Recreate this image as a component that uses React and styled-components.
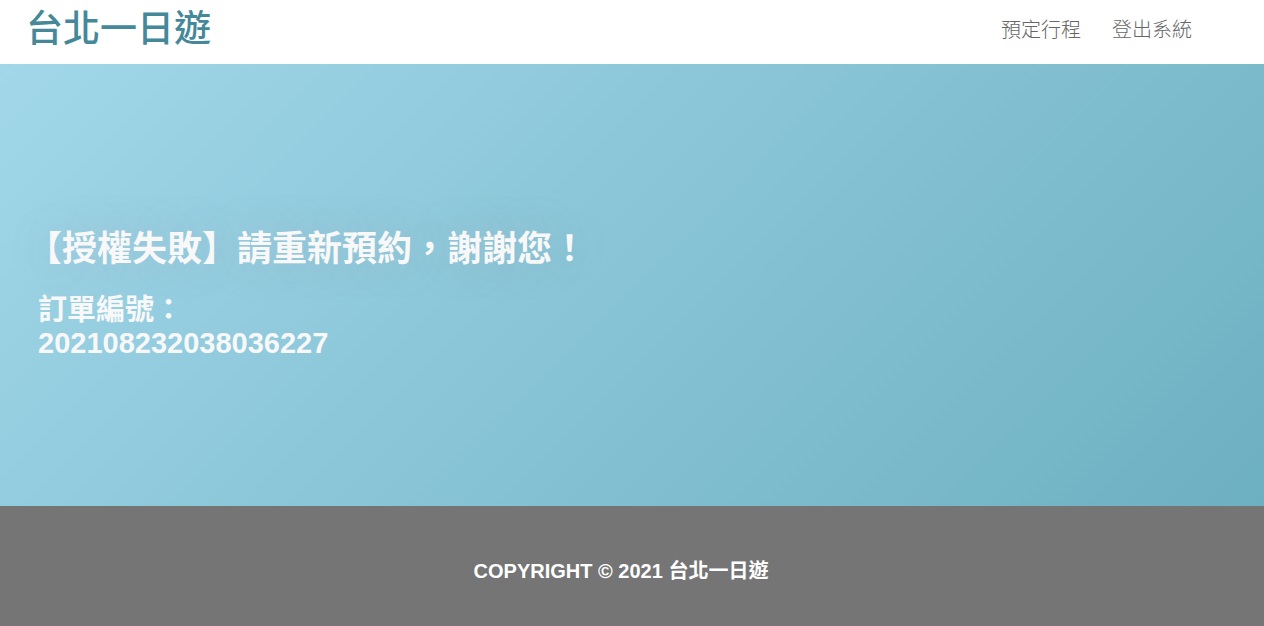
import React from "react";
import styled, { createGlobalStyle } from "styled-components";

const GlobalStyle = createGlobalStyle`
  *, *::before, *::after { box-sizing: border-box; }
  body {
    margin: 0;
    font-family: "Liberation Sans", "Noto Sans CJK TC", sans-serif;
  }
`;

const Page = styled.div`
  display: flex;
  flex-direction: column;
  min-height: 100vh;
`;

const Header = styled.header`
  display: flex;
  align-items: center;
  justify-content: space-between;
  height: 64px;
  padding: 0 72px 4px 26px;
  background: #fff;
`;

const Brand = styled.a`
  color: #448899;
  font-size: 37px;
  font-weight: 500;
  line-height: 56px;
  text-decoration: none;
`;

const Nav = styled.nav`
  display: flex;
  gap: 31px;
`;

const NavLink = styled.a`
  color: #666;
  font-size: 20px;
  font-weight: 300;
  line-height: 28px;
  text-decoration: none;
`;

const Main = styled.main`
  flex: 1;
  display: flex;
  flex-direction: column;
  justify-content: center;
  gap: 25px;
  padding: 19px 38px 0 27px;
  color: #f8f8f8;
  background: linear-gradient(135deg, #a1d7e9, #6db0c1);
`;

const Title = styled.h1`
  margin: 0;
  font-size: 35px;
  font-weight: 700;
  line-height: 40px;
  text-shadow: 0 0 40px rgba(180, 160, 180, 0.25);
`;

const Order = styled.h2`
  display: flex;
  flex-direction: column;
  margin: 0;
  padding-left: 11px;
  font-size: 29px;
  font-weight: 700;
  line-height: 33px;
`;

const Footer = styled.footer`
  display: flex;
  align-items: center;
  justify-content: center;
  height: 120px;
  padding: 10px 22px 0 0;
  color: #fff;
  background: #757575;
  font-size: 20px;
  font-weight: 700;
  line-height: 28px;
`;

export default function App() {
  return (
    <>
      <GlobalStyle />
      <Page lang="zh-Hant">
        <Header>
          <Brand href="#home">台北一日遊</Brand>
          <Nav>
            <NavLink href="#booking">預定行程</NavLink>
            <NavLink href="#logout">登出系統</NavLink>
          </Nav>
        </Header>
        <Main>
          <Title>【授權失敗】請重新預約，謝謝您！</Title>
          <Order>
            <span>訂單編號：</span>
            <span>202108232038036227</span>
          </Order>
        </Main>
        <Footer>COPYRIGHT © 2021 台北一日遊</Footer>
      </Page>
    </>
  );
}
